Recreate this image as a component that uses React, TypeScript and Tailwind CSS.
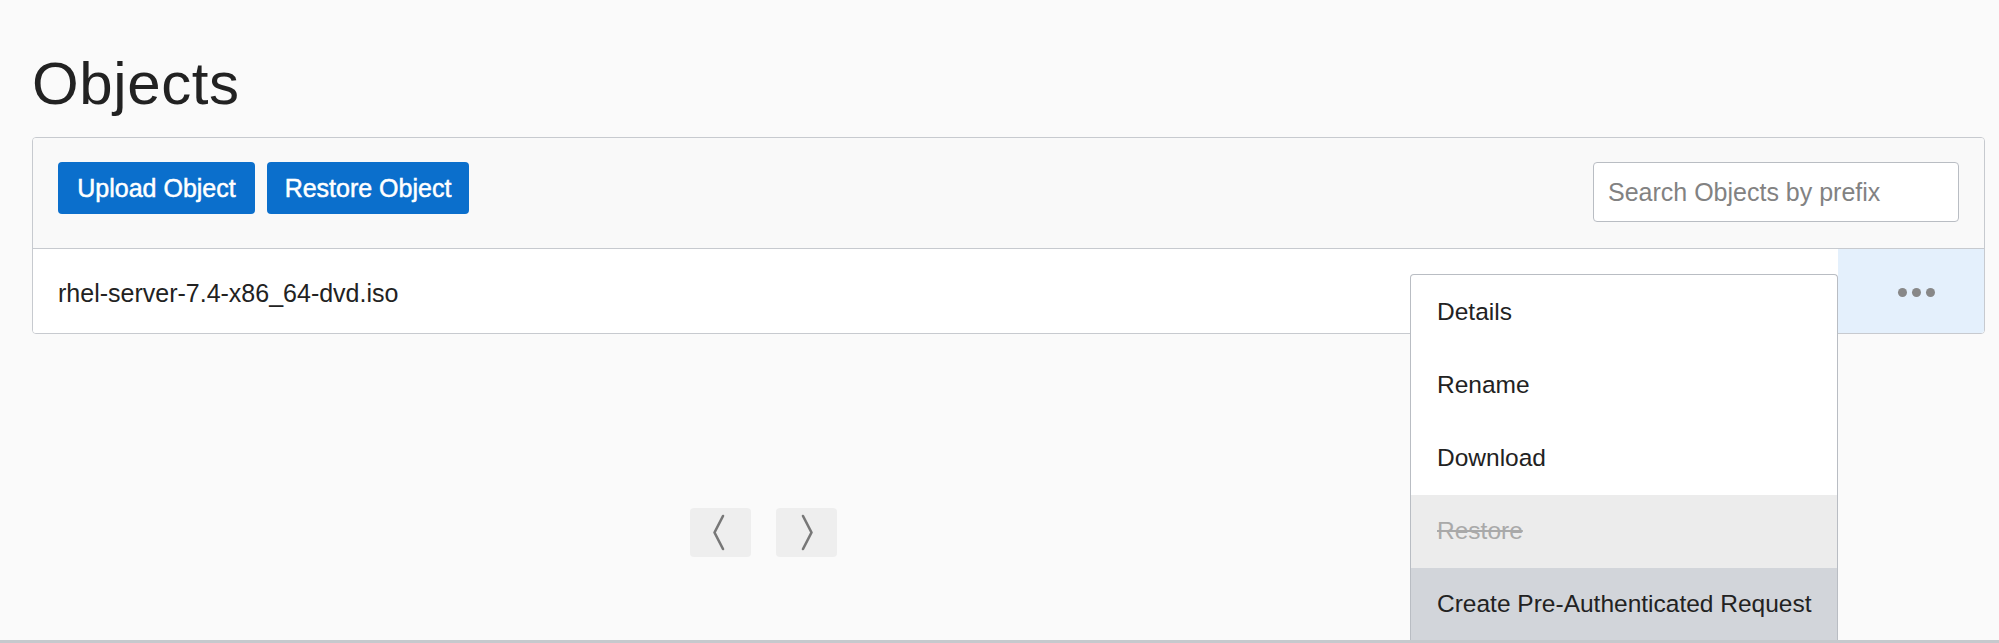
import React from "react";

const menuItems = [
  { label: "Details", kind: "normal" },
  { label: "Rename", kind: "normal" },
  { label: "Download", kind: "normal" },
  { label: "Restore", kind: "disabled" },
  { label: "Create Pre-Authenticated Request", kind: "active" },
];

export default function App() {
  return (
    <div className="relative w-[1999px] h-[643px] overflow-hidden bg-[#fafafa] font-['Liberation_Sans',Arial,sans-serif] text-[#222] flex flex-col">
      <div className="pl-[32px] pr-[14px] pt-[54px]">
        <h1 className="text-[60px] leading-[60px] font-normal tracking-[0.6px]">Objects</h1>
        <div className="mt-[23px] border border-[#c7cacf] rounded-[4px] overflow-hidden">
          <div className="h-[111px] bg-[#f9f9f9] border-b border-[#c7cacf] pl-[25px] pr-[25px] pt-[24px] flex justify-between items-start">
            <div className="flex gap-[12px]">
              <button className="w-[197px] h-[52px] rounded-[4px] bg-[#0b6fcc] text-white text-[25px] leading-[52px] text-center [-webkit-text-stroke:0.5px_white]">
                Upload Object
              </button>
              <button className="w-[202px] h-[52px] rounded-[4px] bg-[#0b6fcc] text-white text-[25px] leading-[52px] text-center [-webkit-text-stroke:0.5px_white]">
                Restore Object
              </button>
            </div>
            <div className="w-[366px] h-[60px] rounded-[4px] border border-[#b9bdc3] bg-white flex items-center pl-[14px]">
              <span className="text-[25px] text-[#828282] leading-none">Search Objects by prefix</span>
            </div>
          </div>
          <div className="h-[84px] bg-white flex">
            <div className="flex-1 flex items-center pl-[25px] pt-[5px]">
              <span className="text-[25px] leading-none">rhel-server-7.4-x86_64-dvd.iso</span>
            </div>
            <div className="w-[146px] bg-[#e4f0fc] flex items-center justify-center gap-[5px] pl-[10px] pt-[2px]">
              <span className="w-[9px] h-[9px] rounded-full bg-[#888]" />
              <span className="w-[9px] h-[9px] rounded-full bg-[#888]" />
              <span className="w-[9px] h-[9px] rounded-full bg-[#888]" />
            </div>
          </div>
        </div>
      </div>

      <div className="mt-[174px] pl-[690px] flex gap-[25px]">
        <div className="w-[61px] h-[49px] rounded-[4px] bg-[#eeeeee]">
          <svg width="61" height="49" viewBox="0 0 61 49">
            <path d="M33 8 L24.5 24.5 L33 41" fill="none" stroke="#777" strokeWidth="2.6" strokeLinecap="round" strokeLinejoin="round" />
          </svg>
        </div>
        <div className="w-[61px] h-[49px] rounded-[4px] bg-[#eeeeee]">
          <svg width="61" height="49" viewBox="0 0 61 49">
            <path d="M27 8 L35.5 24.5 L27 41" fill="none" stroke="#777" strokeWidth="2.6" strokeLinecap="round" strokeLinejoin="round" />
          </svg>
        </div>
      </div>

      <div className="mt-auto h-[3px] bg-[#c6c9cd] relative z-20" />

      <div className="absolute left-[1410px] top-[274px] w-[428px] h-[366px] overflow-hidden bg-white border border-b-0 border-[#b9bdc3] rounded-t-[4px] pt-[1px] z-10">
        {menuItems.map((item) => (
          <div
            key={item.label}
            className={
              item.kind === "disabled"
                ? "h-[73px] flex items-center pl-[26px] bg-[#ececec] text-[#a9a9a9] line-through"
                : item.kind === "active"
                ? "h-[73px] flex items-center pl-[26px] bg-[#d2d5da] text-[#222]"
                : "h-[73px] flex items-center pl-[26px] text-[#222]"
            }
          >
            <span className="text-[24.5px] leading-none">{item.label}</span>
          </div>
        ))}
      </div>
    </div>
  );
}
